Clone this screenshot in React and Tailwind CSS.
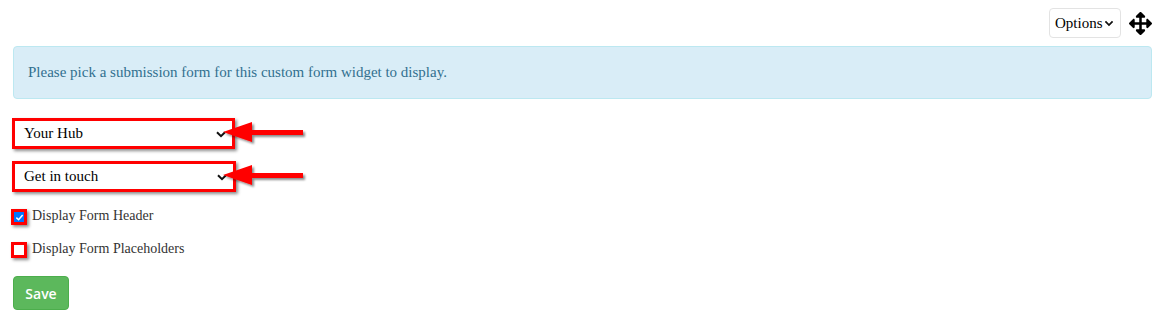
import { FaArrowsAlt } from 'react-icons/fa';

function Chevron({ className = '' }) {
  return (
    <svg viewBox="0 0 10 7" className={className} width="10" height="7">
      <path d="M1 1.2 L5 5.2 L9 1.2" fill="none" stroke="#111" strokeWidth="2" />
    </svg>
  );
}

function RedArrow() {
  return (
    <svg width="84" height="26" viewBox="0 0 84 26" className="overflow-visible">
      <defs>
        <filter id="sh" x="-20%" y="-40%" width="140%" height="180%">
          <feDropShadow dx="2" dy="2" stdDeviation="1.2" floodColor="#000" floodOpacity="0.45" />
        </filter>
      </defs>
      <path d="M0 10 L29 0 L29 8 L80 8 L80 13 L29 13 L29 20 Z" fill="#ff0000" filter="url(#sh)" />
    </svg>
  );
}

function AnnotatedSelect({ label, width }) {
  return (
    <div className="relative flex items-center">
      <div
        className={`${width} h-[31px] border-[3px] border-[#ff0000] bg-white shadow-[2px_2px_3px_rgba(0,0,0,0.45)] flex items-center justify-between pl-[9px] pr-[6px]`}
      >
        <span className="text-[15px] text-black">{label}</span>
        <Chevron className="mt-[2px]" />
      </div>
      <div className="absolute left-[211px] top-[4px]">
        <RedArrow />
      </div>
    </div>
  );
}

function AnnotatedCheck({ checked, label }) {
  return (
    <label className="flex items-center gap-[5px] h-[20px]">
      <span className="w-[16px] h-[16px] border-[3px] border-[#ff0000] bg-white shadow-[2px_2px_3px_rgba(0,0,0,0.45)] flex items-center justify-center">
        {checked ? (
          <span className="w-[10px] h-[10px] bg-[#0075ff] flex items-center justify-center">
            <svg viewBox="0 0 10 10" width="9" height="9">
              <path d="M1.5 5.2 L4 7.5 L8.5 2.3" fill="none" stroke="#fff" strokeWidth="1.7" />
            </svg>
          </span>
        ) : (
          <span className="w-[10px] h-[10px] bg-white" />
        )}
      </span>
      <span className="text-[14px] text-[#333] -mt-[3px]">{label}</span>
    </label>
  );
}

export default function App() {
  return (
    <div className="min-h-screen bg-white pl-[13px] pr-[11px] font-['Liberation_Serif',serif] text-[14px] text-[#333]">
      {/* Toolbar */}
      <div className="flex justify-end items-center gap-[8px] pt-[8px]">
        <div className="h-[30px] w-[72px] border border-[#e3e3e3] rounded-[4px] flex items-center justify-between pl-[5px] pr-[6px] text-[15px] text-black">
          Options
          <Chevron className="scale-90" />
        </div>
        <FaArrowsAlt className="w-[23px] h-[23px] text-black" />
      </div>

      {/* Info alert */}
      <div className="mt-[8px] h-[53px] flex items-center px-[14px] border border-[#bce8f1] bg-[#d9edf7] rounded-[4px] text-[#31708f] text-[15px]">
        Please pick a submission form for this custom form widget to display.
      </div>

      {/* Form */}
      <div className="ml-[-1px] mt-[19px] flex flex-col gap-[12px]">
        <AnnotatedSelect label="Your Hub" width="w-[223px]" />
        <AnnotatedSelect label="Get in touch" width="w-[224px]" />
      </div>

      <div className="ml-[-2px] mt-[15px] flex flex-col gap-[13px]">
        <AnnotatedCheck checked label="Display Form Header" />
        <AnnotatedCheck label="Display Form Placeholders" />
      </div>

      <button className="mt-[16px] w-[56px] h-[34px] rounded-[4px] border border-[#4cae4c] bg-[#5cb85c] text-white font-['Open_Sans',sans-serif] font-semibold text-[14px]">
        Save
      </button>
    </div>
  );
}
